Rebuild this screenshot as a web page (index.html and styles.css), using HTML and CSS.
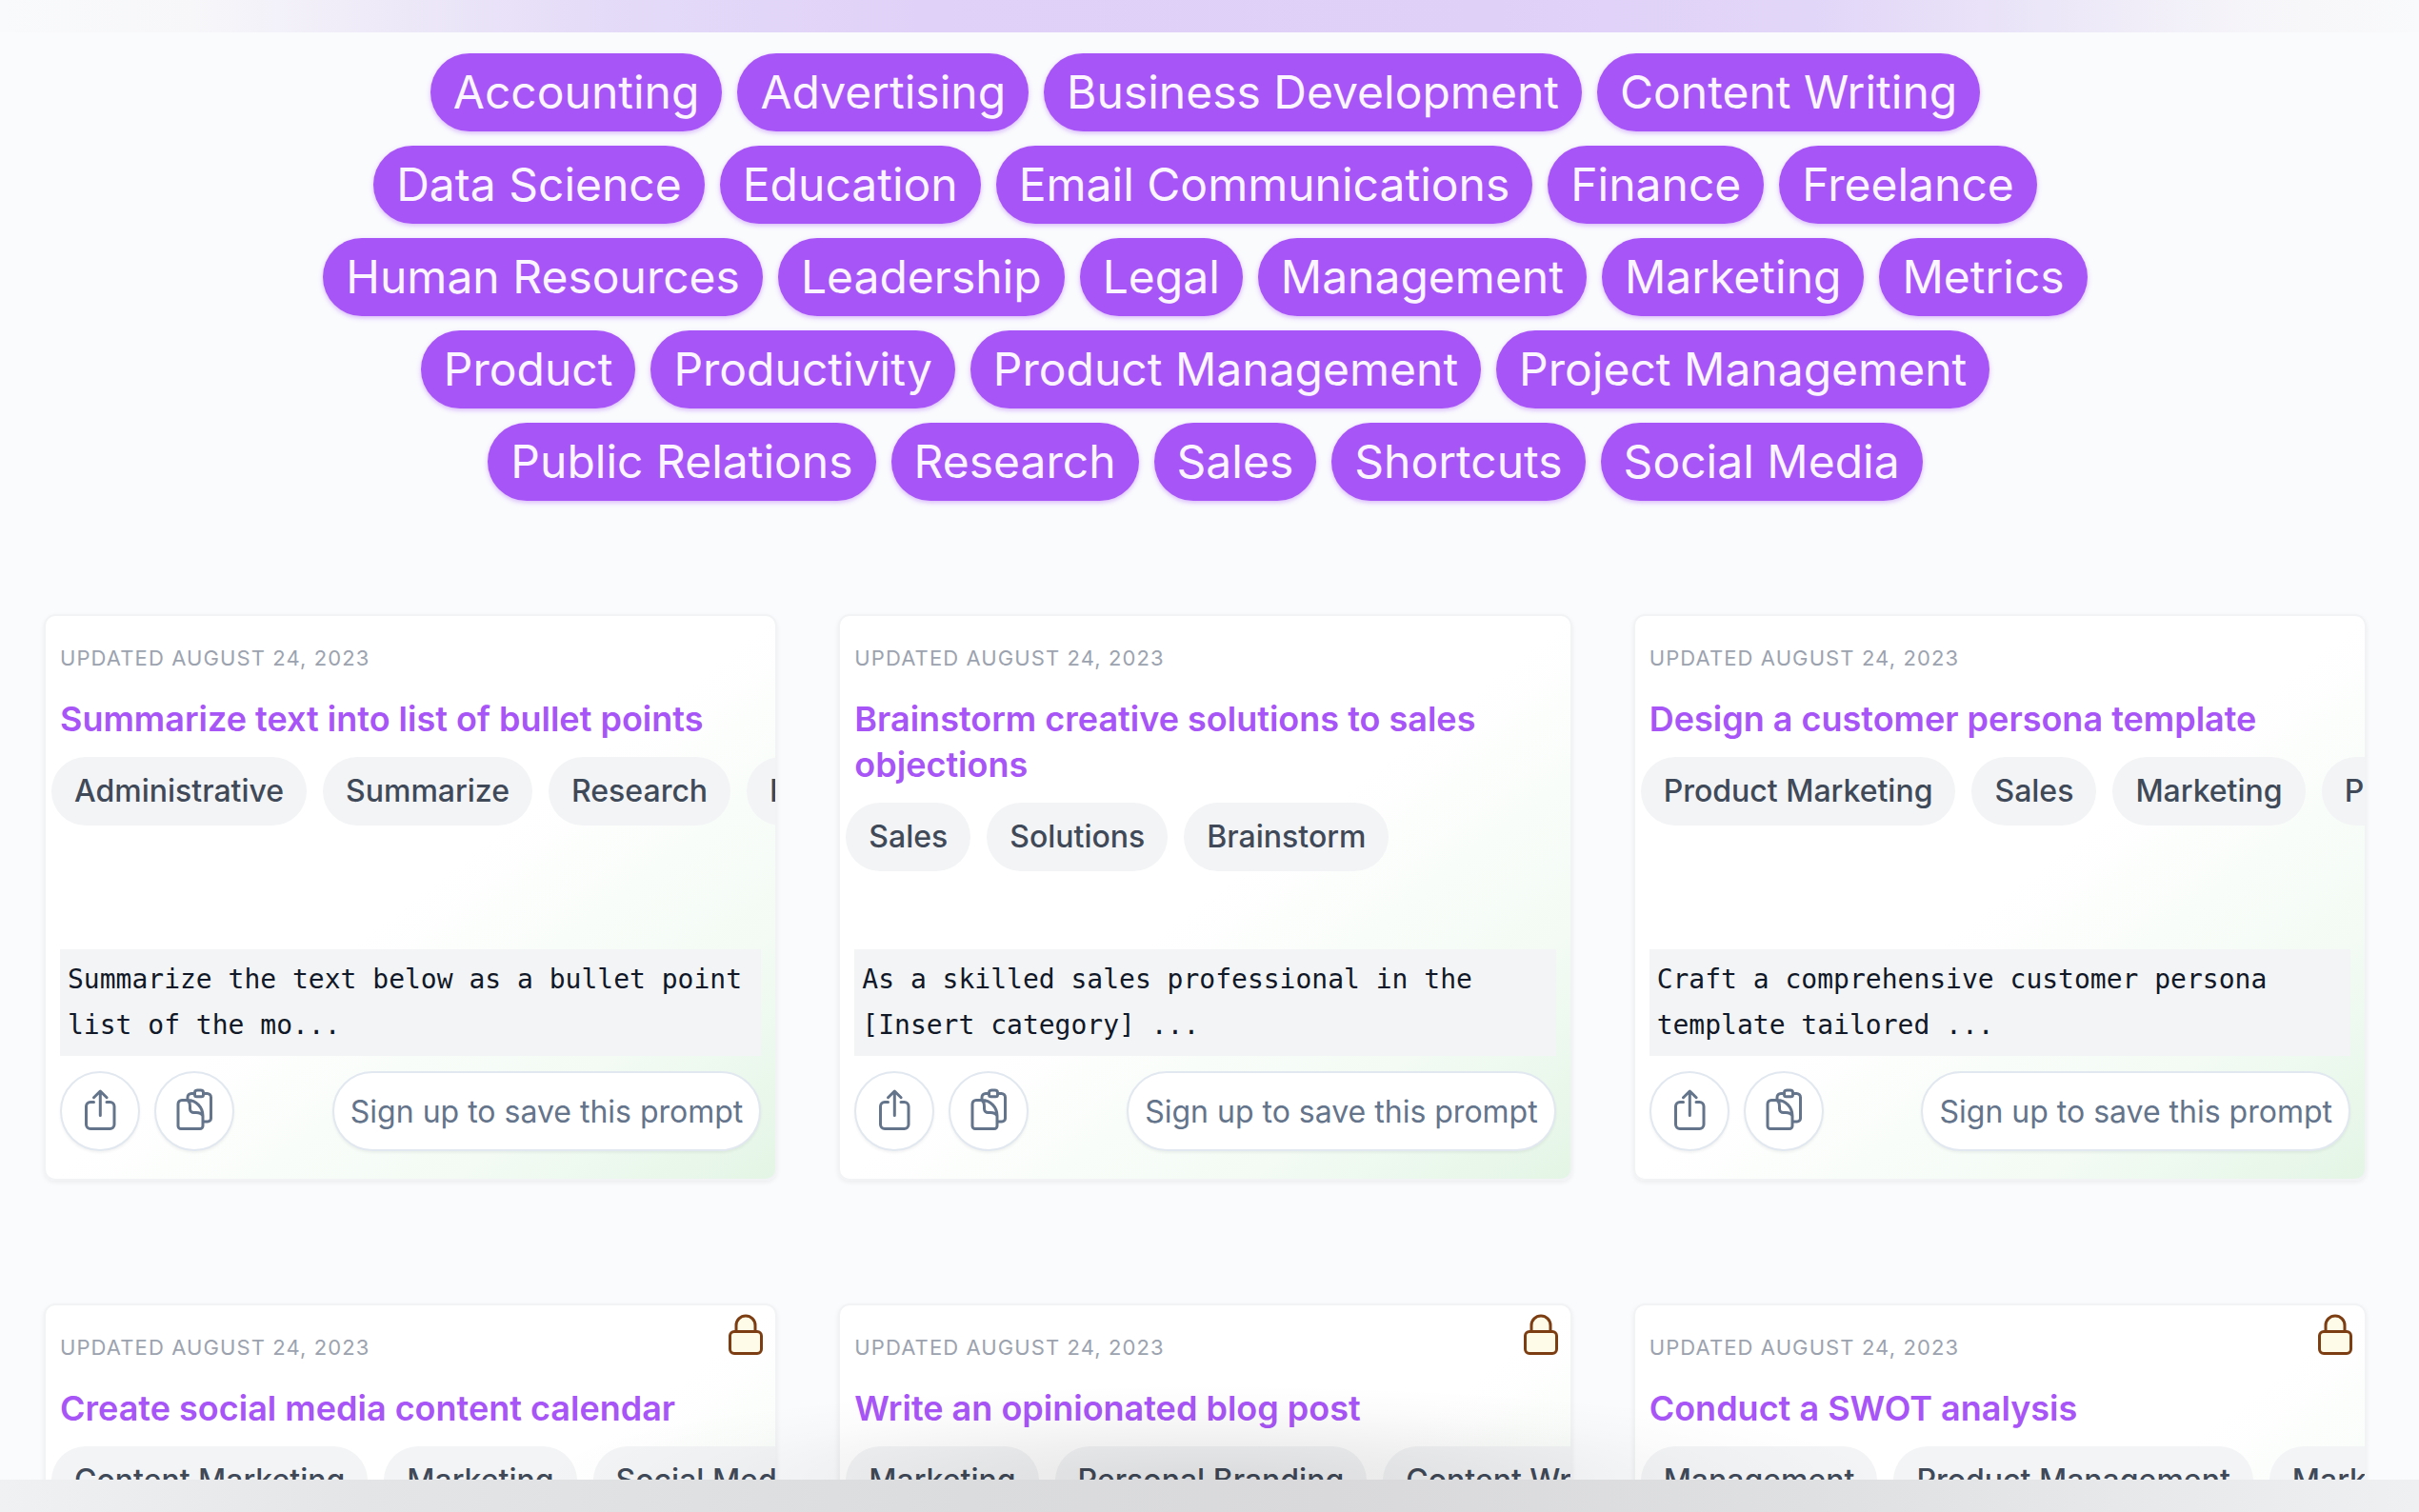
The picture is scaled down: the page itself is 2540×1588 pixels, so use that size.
FILE: index.html
```html
<!DOCTYPE html>
<html lang="en">
<head>
<meta charset="utf-8">
<meta name="viewport" content="width=device-width, initial-scale=1">
<title>Prompt library</title>
<link rel="stylesheet" href="styles.css">
</head>
<body>
<svg class="sprite" aria-hidden="true">
  <symbol id="icon-share" viewBox="0 0 48 48">
    <path d="M17.500 14.500H14a4.500 4.500 0 0 0-4.500 4.500v19a4.500 4.500 0 0 0 4.500 4.500h20.500a4.500 4.500 0 0 0 4.500-4.500V19a4.500 4.500 0 0 0-4.500-4.500H31M24.300 28.500V3.500M17.500 9.700l6.800-6.700 6.800 6.700"/>
  </symbol>
  <symbol id="icon-copy" viewBox="0 0 48 48">
    <path d="M17 12.500V9.500a4 4 0 0 1 4-4h3M33.500 5.500h4a4 4 0 0 1 4 4v22a3.500 3.500 0 0 1-3.500 3.500h-5M24.500 4.500c0-1.800 1.500-2.500 3-2.500h3c1.500 0 3 .7 3 2.500v2.200a2 2 0 0 1-2 2h-5a2 2 0 0 1-2-2zM17 12.500h-6a4 4 0 0 0-4 4V39.500a3 3 0 0 0 3 3h20a3 3 0 0 0 3-3V29c0-9-7-16.500-16-16.500 2 1.500 2.500 4 2.500 6.500v2.500a4 4 0 0 0 4 4H26c3 0 5.500.5 7 3.500"/>
  </symbol>
  <symbol id="icon-lock" viewBox="0 0 48 48">
    <path d="M14 20.500V14a10 10 0 0 1 20 0v6.500M12 20.500h24a4.500 4.500 0 0 1 4.500 4.500v14a4.500 4.500 0 0 1-4.500 4.500H12a4.500 4.500 0 0 1-4.500-4.500V25a4.500 4.500 0 0 1 4.500-4.500z"/>
  </symbol>
</svg>
<header class="topbar"></header>
<main class="page">
  <nav class="topics" aria-label="Topics">
    <div class="topic-row"><a href="#">Accounting</a><a href="#">Advertising</a><a href="#">Business Development</a><a href="#">Content Writing</a></div>
    <div class="topic-row"><a href="#">Data Science</a><a href="#">Education</a><a href="#">Email Communications</a><a href="#">Finance</a><a href="#">Freelance</a></div>
    <div class="topic-row"><a href="#">Human Resources</a><a href="#">Leadership</a><a href="#">Legal</a><a href="#">Management</a><a href="#">Marketing</a><a href="#">Metrics</a></div>
    <div class="topic-row"><a href="#">Product</a><a href="#">Productivity</a><a href="#">Product Management</a><a href="#">Project Management</a></div>
    <div class="topic-row"><a href="#">Public Relations</a><a href="#">Research</a><a href="#">Sales</a><a href="#">Shortcuts</a><a href="#">Social Media</a></div>
  </nav>
  <section class="cards">
    <article class="card">
      <p class="date">Updated August 24, 2023</p>
      <h2><a href="#">Summarize text into list of bullet points</a></h2>
      <div class="tags"><span>Administrative</span><span>Summarize</span><span>Research</span><span>Productivity</span></div>
      <pre class="prompt">Summarize the text below as a bullet point list of the mo...</pre>
      <div class="actions">
        <button class="round" aria-label="Share"><svg><use href="#icon-share"/></svg></button>
        <button class="round" aria-label="Copy"><svg><use href="#icon-copy"/></svg></button>
        <button class="signup">Sign up to save this prompt</button>
      </div>
    </article>
    <article class="card">
      <p class="date">Updated August 24, 2023</p>
      <h2><a href="#">Brainstorm creative solutions to sales objections</a></h2>
      <div class="tags"><span>Sales</span><span>Solutions</span><span>Brainstorm</span></div>
      <pre class="prompt">As a skilled sales professional in the [Insert category] ...</pre>
      <div class="actions">
        <button class="round" aria-label="Share"><svg><use href="#icon-share"/></svg></button>
        <button class="round" aria-label="Copy"><svg><use href="#icon-copy"/></svg></button>
        <button class="signup">Sign up to save this prompt</button>
      </div>
    </article>
    <article class="card">
      <p class="date">Updated August 24, 2023</p>
      <h2><a href="#">Design a customer persona template</a></h2>
      <div class="tags"><span>Product Marketing</span><span>Sales</span><span>Marketing</span><span>Product</span></div>
      <pre class="prompt">Craft a comprehensive customer persona template tailored ...</pre>
      <div class="actions">
        <button class="round" aria-label="Share"><svg><use href="#icon-share"/></svg></button>
        <button class="round" aria-label="Copy"><svg><use href="#icon-copy"/></svg></button>
        <button class="signup">Sign up to save this prompt</button>
      </div>
    </article>
    <article class="card">
      <svg class="lock" role="img" aria-label="Locked"><use href="#icon-lock"/></svg>
      <p class="date">Updated August 24, 2023</p>
      <h2><a href="#">Create social media content calendar</a></h2>
      <div class="tags"><span>Content Marketing</span><span>Marketing</span><span>Social Media</span></div>
    </article>
    <article class="card">
      <svg class="lock" role="img" aria-label="Locked"><use href="#icon-lock"/></svg>
      <p class="date">Updated August 24, 2023</p>
      <h2><a href="#">Write an opinionated blog post</a></h2>
      <div class="tags"><span>Marketing</span><span>Personal Branding</span><span>Content Writing</span></div>
    </article>
    <article class="card">
      <svg class="lock" role="img" aria-label="Locked"><use href="#icon-lock"/></svg>
      <p class="date">Updated August 24, 2023</p>
      <h2><a href="#">Conduct a SWOT analysis</a></h2>
      <div class="tags"><span>Management</span><span>Product Management</span><span>Marketing</span></div>
    </article>
  </section>
</main>
<footer class="bottombar"></footer>
</body>
</html>
```

FILE: styles.css
```css
* { box-sizing: border-box; }
body {
  margin: 0;
  height: 100vh;
  display: flex;
  flex-direction: column;
  overflow: hidden;
  background: #fafbfd;
  font-family: Inter, "Liberation Sans", sans-serif;
}
.sprite { display: none; }
svg { fill: none; stroke-linecap: round; stroke-linejoin: round; }
a { text-decoration: none; color: inherit; }
p, h2, pre { margin: 0; }

.topbar {
  flex: 0 0 34px;
  background: linear-gradient(90deg, #f9fafb 0%, #f7f7fa 8%, #efebf8 15%, #e4dbf8 25%, #e0d1f8 38%, #dfd0f8 62%, #e2d6f8 75%, #ede9f8 86%, #f6f5f9 93%, #f9fafb 100%);
}
.page {
  flex: 1 1 0;
  min-height: 0;
  overflow: hidden;
  padding: 22px 55px 0 46px;
}

.topics { display: flex; flex-direction: column; gap: 15px; }
.topic-row { display: flex; justify-content: center; gap: 16px; }
.topic-row a {
  padding: 0 24px;
  border-radius: 42px;
  background: #a855f7;
  color: #faf5ff;
  font-size: 48px;
  line-height: 82px;
  white-space: nowrap;
  box-shadow: 0 2px 5px rgba(168, 85, 247, .4);
}

.cards {
  display: grid;
  grid-template-columns: repeat(3, minmax(0, 1fr));
  grid-auto-rows: minmax(595px, auto);
  gap: 129px 64px;
  margin-top: 119px;
}
.card {
  position: relative;
  display: flex;
  flex-direction: column;
  overflow: hidden;
  padding: 28px 15px 29px 15px;
  border: 2px solid #f1f3f5;
  border-radius: 12px;
  background: linear-gradient(to bottom right, #fff 0%, #fff 50%, #f3fbf4 78%, #e3f5e5 100%);
  background-origin: border-box;
  box-shadow: 0 2px 5px rgba(0, 0, 0, .06);
}
.date {
  color: #9ca3af;
  font-size: 22px;
  line-height: 32px;
  letter-spacing: 0.05em;
  text-transform: uppercase;
}
.card h2 {
  margin-top: 24px;
  color: #a855f7;
  font-size: 36px;
  font-weight: 600;
  line-height: 48px;
}
.tags { display: flex; gap: 17px; margin: 16px -15px 0 -9px; }
.tags span {
  padding: 0 24px;
  border-radius: 36px;
  background: #f3f4f6;
  color: #404958;
  font-size: 32px;
  font-weight: 500;
  line-height: 72px;
  white-space: nowrap;
}
.prompt {
  margin-top: auto;
  padding: 8px;
  background: #f3f4f6;
  color: #111827;
  font: 28px/48px "DejaVu Sans Mono", monospace;
  white-space: pre-wrap;
}
.actions { display: flex; gap: 15px; margin-top: 16px; }
.actions button {
  height: 84px;
  padding: 0;
  border: 2px solid #e2e8f0;
  border-radius: 42px;
  background: #fff;
  color: #64748b;
  font: 32px Inter, "Liberation Sans", sans-serif;
  box-shadow: 0 2px 3px rgba(0, 0, 0, .05);
}
.actions .round {
  display: grid;
  place-items: center;
  width: 84px;
}
.round svg { width: 48px; height: 48px; stroke: #64748b; stroke-width: 3px; }
.actions .signup { margin-left: auto; padding: 0 17px; white-space: nowrap; }
.lock {
  position: absolute;
  top: 7px;
  right: 7px;
  width: 48px;
  height: 48px;
  fill: #fefce8;
  stroke: #7c3d12;
  stroke-width: 3px;
}

.bottombar {
  position: relative;
  flex: 0 0 34px;
  background: linear-gradient(90deg, #f0f1f2 0%, #e4e5e7 15%, #dbdcde 40%, #d9d9db 55%, #dfe0e2 75%, #eff0f1 100%);
}
.bottombar::before {
  content: "";
  position: absolute;
  inset: -100px 22% 34px;
  background: radial-gradient(ellipse 50% 100% at 50% 100%, rgba(0, 0, 0, .1), rgba(0, 0, 0, .06) 40%, rgba(0, 0, 0, .015) 75%, transparent);
  pointer-events: none;
}
```
